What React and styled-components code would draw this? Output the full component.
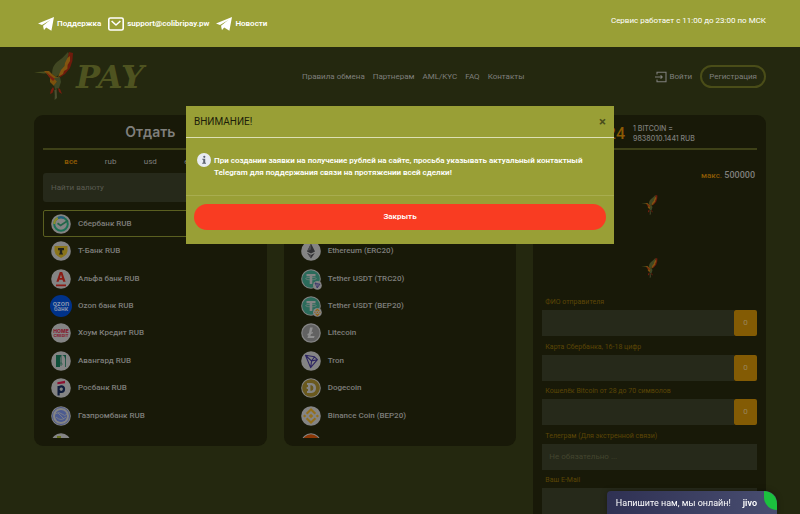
import React from "react";
import styled, { createGlobalStyle, css } from "styled-components";

const colors = {
  olive: "#999f36",
  page: "#24280f",
  card: "#181908",
  field: "#26291a",
  line: "#3e4118",
  accent: "#5a5f20",
  orange: "#8c5a04",
  label: "#5c4606",
  text: "#7f7f7c",
  muted: "#5b5c52",
  disc: "#848484",
};

const GlobalStyle = createGlobalStyle`
  * {
    box-sizing: border-box;
  }
  body {
    margin: 0;
    height: 100vh;
    overflow: hidden;
    background: ${colors.page};
    color: ${colors.text};
    font-family: Roboto, Inter, sans-serif;
    font-size: 8px;
    line-height: 12px;
  }
  a {
    color: inherit;
    text-decoration: none;
  }
  button,
  input {
    margin: 0;
    padding: 0;
    border: 0;
    font: inherit;
    color: inherit;
    background: none;
  }
`;

const Container = styled.div`
  display: flex;
  justify-content: space-between;
  padding: 0 34px;
`;

/* top bar */
const TopBar = styled(Container)`
  height: 47px;
  color: #fff;
  background: ${colors.olive};
`;
const Contacts = styled.div`
  display: flex;
  align-items: center;
  gap: 7px;
  padding-left: 4px;
`;
const ContactLink = styled.a`
  display: flex;
  align-items: center;
  gap: 3px;
  font-weight: 600;
  svg {
    width: 16px;
    height: 16px;
  }
`;
const WorkTime = styled.span`
  padding-top: 15px;
`;

/* header */
const Header = styled(Container)`
  height: 68px;
  align-items: flex-start;
`;
const Logo = styled.a`
  display: flex;
  gap: 2px;
  padding-top: 5px;
  svg {
    width: 40px;
    height: 48px;
  }
`;
const LogoText = styled.span`
  padding-top: 5px;
  color: #4e5320;
  font-family: "DejaVu Serif", serif;
  font-size: 32px;
  font-style: italic;
  font-weight: 700;
  line-height: 40px;
`;
const Nav = styled.nav`
  display: flex;
  gap: 8px;
  padding: 24px 0 0 28px;
`;
const Auth = styled.div`
  display: flex;
  align-items: center;
  gap: 8px;
  padding-top: 18px;
`;
const LoginLink = styled.a`
  display: flex;
  align-items: center;
  gap: 3px;
  svg {
    width: 12px;
    height: 12px;
  }
`;
const RegisterLink = styled.a`
  padding: 2px 7px;
  border: 2px solid #4a4d18;
  border-radius: 12px;
  line-height: 15px;
`;

/* exchange columns */
const Columns = styled.main`
  display: grid;
  grid-template-columns: repeat(3, 1fr);
  align-items: start;
  gap: 17px;
  padding: 0 34px;
`;
const Card = styled.section`
  min-width: 0;
  padding: 0 9px 8px;
  border-radius: 9px;
  background: ${colors.card};
`;
const CardHead = styled.div`
  display: flex;
  align-items: center;
  justify-content: center;
  gap: 8px;
  height: 35px;
  border-bottom: 2px solid ${colors.line};
`;
const CardTitle = styled.h2`
  margin: 0;
  font-family: Inter, sans-serif;
  font-size: 14px;
  font-weight: 600;
`;
const Tabs = styled.div`
  display: grid;
  grid-template-columns: repeat(5, 1fr);
  padding: 6px 8px 5px;
`;
const Tab = styled.button`
  ${({ $active }) =>
    $active &&
    css`
      color: ${colors.orange};
      font-weight: 600;
    `}
`;
const Search = styled.input`
  display: block;
  width: 100%;
  height: 29px;
  margin-bottom: 8px;
  padding: 0 8px;
  border-radius: 3px;
  background: ${colors.field};
  &::placeholder {
    color: ${colors.muted};
    opacity: 1;
  }
`;
const ListWindow = styled.div`
  height: 228px;
  overflow: hidden;
`;
const List = styled.div`
  display: grid;
  grid-template-rows: repeat(9, 1fr);
  height: 247px;
`;
const Currency = styled.button`
  display: flex;
  align-items: center;
  gap: 6px;
  padding: 0 6px;
  border: 1px solid ${({ $active }) => ($active ? colors.accent : "transparent")};
  border-radius: 2px;
  font-weight: 500;
  text-align: left;
`;
const Coin = styled.svg`
  flex: none;
  width: 22px;
  height: 22px;
  font-family: Inter, sans-serif;
`;

/* order form */
const OrderHead = styled(CardHead)`
  padding: 4px 20px 0 0;
`;
const Timer = styled.span`
  color: ${colors.orange};
  font-size: 16px;
  font-weight: 500;
`;
const Rate = styled.span`
  font-family: Inter, sans-serif;
  font-size: 7px;
  font-weight: 500;
  line-height: 10px;
  white-space: nowrap;
`;
const Limit = styled.div`
  padding: 19px 2px 0;
  text-align: right;
  font-size: 9px;
  font-weight: 500;
  span {
    color: ${colors.orange};
    font-size: 8px;
  }
`;
const Birds = styled.div`
  display: flex;
  flex-direction: column;
  align-items: center;
  gap: 43px;
  padding: 13px 0 18px;
  svg {
    width: 17px;
    height: 20px;
  }
`;
const Fields = styled.div`
  display: grid;
  grid-template-rows: repeat(5, 1fr);
  height: 223px;
`;
const Field = styled.div`
  display: flex;
  flex-wrap: wrap;
  align-content: flex-start;
`;
const Label = styled.label`
  width: 100%;
  padding: 0 3px 2px;
  color: ${colors.label};
  font-size: 7px;
`;
const Input = styled.input`
  flex: 1;
  min-width: 0;
  height: 26px;
  padding: 0 7px;
  background: ${colors.field};
  &::placeholder {
    color: #43452f;
    opacity: 1;
  }
`;
const Count = styled.button`
  width: 23px;
  border-radius: 2px;
  color: #99865a;
  background: #835b04;
`;

/* modal */
const Overlay = styled.div`
  position: fixed;
  inset: 0;
  display: flex;
  justify-content: center;
  align-items: flex-start;
  padding-top: 106px;
`;
const Dialog = styled.div`
  width: 428px;
  max-width: 100%;
  color: #fff;
  background: ${colors.olive};
`;
const DialogHead = styled.div`
  display: flex;
  justify-content: space-between;
  align-items: center;
  height: 32px;
  padding: 0 8px;
  border-bottom: 1px solid #dde0b4;
  color: #1c1d0a;
`;
const DialogTitle = styled.h3`
  margin: 0;
  font-size: 10px;
  font-weight: 400;
`;
const CloseIcon = styled.button`
  color: #4a4d1c;
  font-size: 13px;
  font-weight: 700;
`;
const DialogBody = styled.div`
  display: flex;
  gap: 3px;
  padding: 15px 11px 16px;
  svg {
    flex: none;
    width: 14px;
    height: 14px;
  }
`;
const Message = styled.p`
  margin: 0;
  padding-top: 2px;
  font-weight: 600;
`;
const DialogFoot = styled.div`
  padding: 8px 8px 14px;
  border-top: 1px solid #a8ad50;
`;
const CloseButton = styled.button`
  display: block;
  width: 100%;
  height: 26px;
  border-radius: 13px;
  background: #f93c22;
  font-weight: 600;
`;

/* chat */
const Chat = styled.button`
  position: fixed;
  right: 23px;
  bottom: 0;
  display: flex;
  align-items: center;
  gap: 12px;
  height: 23px;
  padding: 0 0 0 9px;
  overflow: hidden;
  border-radius: 4px 12px 0 0;
  color: #fff;
  background: linear-gradient(90deg, #2f3153, #484d70);
  box-shadow: 0 0 6px rgba(0, 0, 0, 0.3);
  font-size: 9px;
  white-space: nowrap;
`;
const ChatBrand = styled.span`
  padding-right: 7px;
  font-weight: 600;
`;
const Leaf = styled.span`
  flex: none;
  align-self: flex-start;
  width: 13px;
  height: 19px;
  margin-left: -12px;
  border-radius: 0 13px 0 13px;
  background: #1bc13e;
`;

const Bird = () => (
  <svg viewBox="0 0 40 48" aria-hidden="true">
    <path d="M0 20.2 11 19.6 14 21 10 21.4Z" fill="#4b5020" />
    <path d="M18 22Q18 14 23 10Q29 6 34 0L36 4 33 13 27 21 22 25Z" fill="#414722" />
    <path d="M35 0 39 1 38.4 9 36 16 31 22 25 26 28 19 32 13Z" fill="#6e1b0c" />
    <path d="M33.4 6 36 4 36 9 33.6 13 33.4 17 30 19 29 22 24 25 27 18 30.6 14 31 11Z" fill="#835510" />
    <path d="M10 19 15 19 18 22 22 25 25 25 23 30 20 34 16 30 16 25Z" fill="#7d520d" />
    <path d="M12 20 17 24 21 27 19 29 15 25Z" fill="#7a2110" />
    <path d="M20 26 26 25 27 30 25 36 21 37 20 33 23 30Z" fill="#3e4726" />
    <path d="M19 35 20 37 18.4 41 16 42 17 38ZM24 36 26 37 28 42 25 40Z" fill="#7a1d0e" />
    <path d="M20.4 38 22.6 37 23 46 20.6 48 20.8 43Z" fill="#4b4f30" />
  </svg>
);

const TelegramIcon = () => (
  <svg viewBox="0 0 16 16" fill="currentColor" aria-hidden="true">
    <path d="M0 7.6 16 1 13.4 14.8 8.2 11.6 6 14 5.2 9.8 12.4 4 4 9Z" />
    <path d="M5.2 9.8 12.4 4 7 10.2 6 14Z" fillOpacity="0.7" />
  </svg>
);

const MailIcon = () => (
  <svg viewBox="0 0 16 16" fill="none" stroke="currentColor" strokeWidth="1.6" strokeLinejoin="round" aria-hidden="true">
    <rect x="0.8" y="2" width="14.4" height="12" rx="1.6" />
    <path d="M3.6 5 8 9 12.4 5" />
  </svg>
);

const LoginIcon = () => (
  <svg viewBox="0 0 12 12" fill="none" stroke="currentColor" strokeWidth="1.1" aria-hidden="true">
    <path d="M2 3.6V1.2H11V10.8H2V8.4M0 6H7.2M5.6 4.4 7.2 6 5.6 7.6" />
  </svg>
);

const InfoIcon = () => (
  <svg viewBox="0 0 14 14" aria-hidden="true">
    <circle cx="7" cy="7" r="7" fill="#e8ecf2" />
    <circle cx="7.3" cy="3.8" r="1.1" fill="#5d6470" />
    <path d="M5.3 5.8H8.2V9.7H9V10.8H5.2V9.7H6.2V6.8H5.3Z" fill="#5d6470" />
  </svg>
);

const UsdtMark = () => (
  <>
    <circle cx="11" cy="11" r="8.8" fill="#2b6b5b" />
    <path d="M6.5 6H15.5V8.3H12.3V16H9.7V8.3H6.5Z" fill={colors.disc} />
    <ellipse cx="11" cy="10.6" rx="5.4" ry="1.3" fill="none" stroke={colors.disc} strokeWidth="0.6" />
    <circle cx="17.4" cy="17.4" r="4.4" fill={colors.disc} />
  </>
);

const marks = {
  sber: (
    <>
      <circle cx="11" cy="11" r="6.8" fill="none" stroke="#1c7155" strokeWidth="2" />
      <path d="M4.3 11A6.8 6.8 0 0 1 8 5" fill="none" stroke="#8b8b2a" strokeWidth="2" />
      <path d="M8 5A6.8 6.8 0 0 1 14 5" fill="none" stroke="#245d80" strokeWidth="2" />
      <path d="M7.5 10.2 10.6 12.5 18 7.6" fill="none" stroke="#236649" strokeWidth="1.8" />
    </>
  ),
  tbank: (
    <>
      <path d="M4.5 6H17.5V11Q17 15.5 11 18Q5 15.5 4.5 11Z" fill="#8a7419" />
      <path d="M8 8H14V10.3H12.2V13.5H13V14.6H9V13.5H9.8V10.3H8Z" fill="#20211c" />
    </>
  ),
  alfa: (
    <path
      d="M6 16.4H16V18.2H6ZM9.8 4H12.2L15.6 13.8H13.2L12.5 11.7H9.3L8.6 13.8H6.4ZM11 6.6 9.9 9.9H12Z"
      fill="#8b1b14"
      fillRule="evenodd"
    />
  ),
  ozon: (
    <>
      <circle cx="11" cy="11" r="11" fill="#003289" />
      <text x="11" y="10.5" fontSize="7" fontWeight="600" textAnchor="middle" fill="#8b96ae">ozon</text>
      <text x="11" y="16.2" fontSize="6" fontWeight="600" textAnchor="middle" fill="#8b96ae">банк</text>
    </>
  ),
  home: (
    <>
      <text x="11" y="10.8" fontSize="5" fontWeight="800" textAnchor="middle" fill="#861c31">HOME</text>
      <text x="11" y="14.7" fontSize="4" fontWeight="800" textAnchor="middle" fill="#861c31">CREDIT</text>
    </>
  ),
  avangard: (
    <>
      <path d="M6 5H16V17H6Z" fill="#11503b" />
      <path d="M10 17V8Q11 5 12.5 5Q15 6 15.2 9V17Z" fill={colors.disc} />
      <path d="M11 6V12M11 12.2 9.8 14.4Q11 16.4 12.2 14.4Z" stroke="#11503b" strokeWidth="0.8" fill="none" />
    </>
  ),
  rosbank: (
    <>
      <path d="M7.4 5.2 15 3.8V6.2L7.4 7.3Z" fill="#8c102f" />
      <path d="M8.6 18.4V9M8.6 11.5Q9.4 9.2 11.8 9.4Q14 9.8 14 12.1Q14 15 11.4 15Q9 15 8.6 13" fill="none" stroke="#101d3c" strokeWidth="2.2" />
    </>
  ),
  gazprom: (
    <>
      <circle cx="11" cy="11" r="8.5" fill="none" stroke="#4d5a8b" strokeWidth="1" />
      <circle cx="11" cy="11" r="6" fill="#4c5b91" />
      <path d="M5 9Q9 6 12 9T17 9M6 12Q11 17 16 12M8 8 14 14" fill="none" stroke={colors.disc} strokeWidth="0.8" />
    </>
  ),
  other: <path d="M7 4H11V6H14V9H8V7H7Z" fill="#66701c" />,
  btc: (
    <>
      <circle cx="11" cy="11" r="9" fill="#8a5512" />
      <path d="M8 6H12Q15 8 12 11Q16 14 12 16H8Z" fill={colors.disc} />
    </>
  ),
  eth: (
    <>
      <path d="M11 3.5 7 11.5 11 13.6 15 11.5ZM7.2 13 11 18.5 14.8 13 11 15Z" fill="#303033" />
      <path d="M11 3.5V9.6L7 11.5ZM11 15V18.5L7.2 13Z" fill="#4a4a4e" />
    </>
  ),
  usdtTrc: (
    <>
      <UsdtMark />
      <path d="M15 15 20 16.2 17.2 20ZM15 15 18 17.2 20 16.2M18 17.2 17.2 20" fill="none" stroke="#3b3569" strokeWidth="0.8" />
    </>
  ),
  usdtBep: (
    <>
      <UsdtMark />
      <path d="M15.6 16.2 17.4 14.4 19.2 16.2M15.6 18.6 17.4 20.4 19.2 18.6M14.4 17.4H15.4M16.8 17.4H18M19.4 17.4H20.4" fill="none" stroke="#936414" strokeWidth="1.2" />
    </>
  ),
  ltc: (
    <>
      <circle cx="11" cy="11" r="8.6" fill="#626262" />
      <path d="M10 5.5H12.8L11.4 10.4 13 9.8 12.6 11.4 11 12 10.4 14H14.6L14 16H7.4L8.4 12.9 7.2 13.4 7.6 11.8 8.9 11.3Z" fill="#8f8f8f" />
    </>
  ),
  tron: (
    <path
      d="M5.5 5.3 14.5 6.8 17.4 9.6 10.6 17.6ZM5.5 5.3 11.6 11 17.4 9.6M14.5 6.8 11.6 11 10.6 17.6"
      fill="none"
      stroke="#2c2561"
      strokeWidth="1.1"
      strokeLinejoin="round"
    />
  ),
  doge: (
    <>
      <circle cx="11" cy="11" r="8.8" fill="#6a591d" />
      <path d="M7 6H11.5Q16 6.4 16 11T11.5 16H7V14H8V12H6.7V10H8V8H7ZM10.4 8.2V13.8H11.6Q13.4 13.4 13.4 11T11.6 8.2Z" fill={colors.disc} fillRule="evenodd" />
    </>
  ),
  bnb: (
    <>
      <path d="M6.6 8.8 11 4.4 15.4 8.8M6.6 13.2 11 17.6 15.4 13.2" fill="none" stroke="#94701b" strokeWidth="2.1" />
      <path d="M11 8.8 13.2 11 11 13.2 8.8 11ZM4.6 9.4 6.2 11 4.6 12.6 3 11ZM17.4 9.4 19 11 17.4 12.6 15.8 11Z" fill="#94701b" />
    </>
  ),
  xmr: <circle cx="11" cy="11" r="8.7" fill="#8c3604" />,
};

const giveList = [
  { mark: "sber", name: "Сбербанк RUB" },
  { mark: "tbank", name: "Т-Банк RUB" },
  { mark: "alfa", name: "Альфа банк RUB" },
  { mark: "ozon", name: "Ozon банк RUB" },
  { mark: "home", name: "Хоум Кредит RUB" },
  { mark: "avangard", name: "Авангард RUB" },
  { mark: "rosbank", name: "Росбанк RUB" },
  { mark: "gazprom", name: "Газпромбанк RUB" },
  { mark: "other", name: "" },
];

const getList = [
  { mark: "btc", name: "Bitcoin" },
  { mark: "eth", name: "Ethereum (ERC20)" },
  { mark: "usdtTrc", name: "Tether USDT (TRC20)" },
  { mark: "usdtBep", name: "Tether USDT (BEP20)" },
  { mark: "ltc", name: "Litecoin" },
  { mark: "tron", name: "Tron" },
  { mark: "doge", name: "Dogecoin" },
  { mark: "bnb", name: "Binance Coin (BEP20)" },
  { mark: "xmr", name: "" },
];

const fields = [
  { id: "fio", label: "ФИО отправителя", count: 0 },
  { id: "card", label: "Карта Сбербанка, 16-18 цифр", count: 0 },
  { id: "wallet", label: "Кошелёк Bitcoin от 28 до 70 символов", count: 0 },
  { id: "telegram", label: "Телеграм (Для экстренной связи)", placeholder: "Не обязательно ..." },
  { id: "email", label: "Ваш E-Mail" },
];

const CurrencyCard = ({ title, items }) => (
  <Card>
    <CardHead>
      <CardTitle>{title}</CardTitle>
    </CardHead>
    <Tabs>
      {["все", "rub", "usd", "eur", "coin"].map((tab, index) => (
        <Tab key={tab} $active={index === 0}>
          {tab}
        </Tab>
      ))}
    </Tabs>
    <Search placeholder="Найти валюту" aria-label={title} />
    <ListWindow>
      <List>
        {items.map(({ mark, name }, index) => (
          <Currency key={mark} $active={index === 0} aria-label={name || mark}>
            <Coin viewBox="0 0 22 22" aria-hidden="true">
              <circle cx="11" cy="11" r="9.8" fill={colors.disc} />
              {marks[mark]}
            </Coin>
            {name}
          </Currency>
        ))}
      </List>
    </ListWindow>
  </Card>
);

const OrderCard = () => (
  <Card>
    <OrderHead>
      <Timer>05:24</Timer>
      <Rate>
        1 BITCOIN =
        <br />
        9838010.1441 RUB
      </Rate>
    </OrderHead>
    <Limit>
      <span>макс.</span> 500000
    </Limit>
    <Birds>
      <Bird />
      <Bird />
    </Birds>
    <Fields>
      {fields.map(({ id, label, placeholder, count }) => (
        <Field key={id}>
          <Label htmlFor={id}>{label}</Label>
          <Input id={id} placeholder={placeholder} />
          {count !== undefined && <Count>{count}</Count>}
        </Field>
      ))}
    </Fields>
  </Card>
);

const App = () => (
  <>
    <GlobalStyle />
    <TopBar>
      <Contacts>
        <ContactLink href="#support">
          <TelegramIcon />
          Поддержка
        </ContactLink>
        <ContactLink href="#mail">
          <MailIcon />
          support@colibripay.pw
        </ContactLink>
        <ContactLink href="#news">
          <TelegramIcon />
          Новости
        </ContactLink>
      </Contacts>
      <WorkTime>Сервис работает с 11:00 до 23:00 по МСК</WorkTime>
    </TopBar>
    <Header as="header">
      <Logo href="#home">
        <Bird />
        <LogoText>PAY</LogoText>
      </Logo>
      <Nav>
        <a href="#rules">Правила обмена</a>
        <a href="#partners">Партнерам</a>
        <a href="#aml">AML/KYC</a>
        <a href="#faq">FAQ</a>
        <a href="#contacts">Контакты</a>
      </Nav>
      <Auth>
        <LoginLink href="#login">
          <LoginIcon />
          Войти
        </LoginLink>
        <RegisterLink href="#register">Регистрация</RegisterLink>
      </Auth>
    </Header>
    <Columns>
      <CurrencyCard title="Отдать" items={giveList} />
      <CurrencyCard title="Получить" items={getList} />
      <OrderCard />
    </Columns>
    <Overlay>
      <Dialog role="dialog" aria-labelledby="notice-title">
        <DialogHead>
          <DialogTitle id="notice-title">ВНИМАНИЕ!</DialogTitle>
          <CloseIcon aria-label="Закрыть окно">×</CloseIcon>
        </DialogHead>
        <DialogBody>
          <InfoIcon />
          <Message>
            При создании заявки на получение рублей на сайте, просьба указывать актуальный контактный
            Telegram для поддержания связи на протяжении всей сделки!
          </Message>
        </DialogBody>
        <DialogFoot>
          <CloseButton>Закрыть</CloseButton>
        </DialogFoot>
      </Dialog>
    </Overlay>
    <Chat>
      Напишите нам, мы онлайн!
      <ChatBrand>jivo</ChatBrand>
      <Leaf />
    </Chat>
  </>
);

export default App;
